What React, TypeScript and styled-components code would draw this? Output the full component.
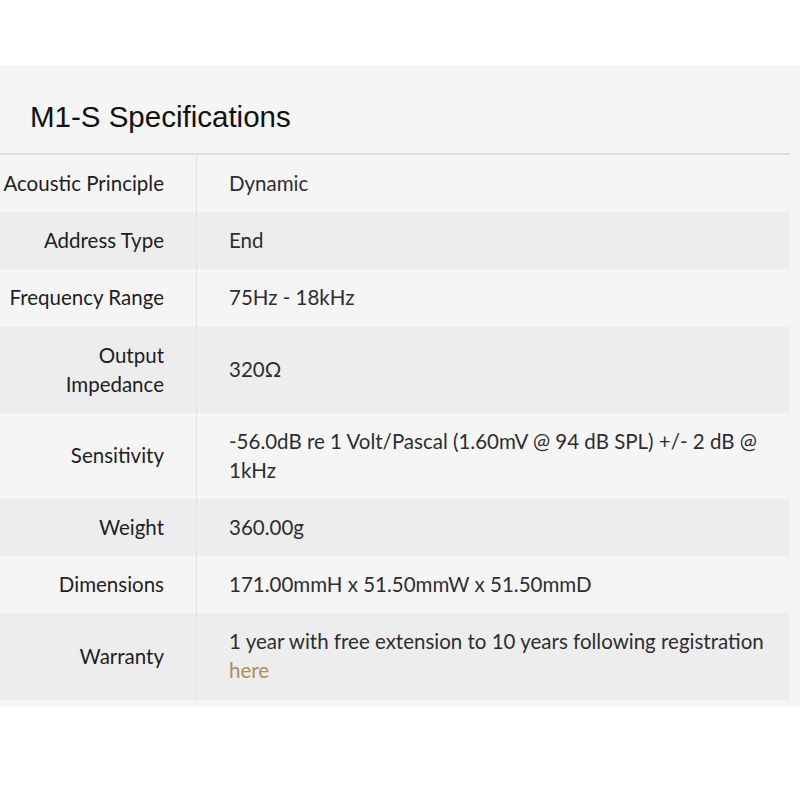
import React from "react";
import styled, { createGlobalStyle } from "styled-components";

const Global = createGlobalStyle`
  html, body { margin: 0; padding: 0; background: #ffffff; }
  * { box-sizing: border-box; }
`;

const Panel = styled.section`
  margin-top: 65px;
  width: 800px;
  background: #f5f5f6;
  padding-bottom: 7px;
`;

const Title = styled.h2`
  margin: 0 10px 0 0;
  padding: 16px 0 0 30px;
  height: 90px;
  display: flex;
  align-items: center;
  font-family: "Liberation Sans", Arial, sans-serif;
  font-weight: 400;
  font-size: 29.5px;
  color: #111;
  border-bottom: 2px solid #dedede;
`;

const Table = styled.div`
  width: 790px;
  display: grid;
  grid-template-columns: 197px 1fr;
`;

const Row = styled.div<{ $shade: boolean }>`
  display: contents;
  & > div {
    background: ${(p) => (p.$shade ? "#ededee" : "#f5f5f6")};
  }
`;

const Label = styled.div`
  font-family: Lato, "Open Sans", sans-serif;
  font-size: 20.5px;
  line-height: 29px;
  color: #1e1e1e;
  text-align: right;
  padding: 14.1px 32px 14.1px 0;
  border-right: 1px solid #e2e2e2;
  display: flex;
  align-items: center;
  justify-content: flex-end;
`;

const Value = styled.div`
  font-family: Lato, "Open Sans", sans-serif;
  font-size: 20.5px;
  line-height: 29px;
  color: #2e2e2e;
  padding: 14.1px 8px 14.1px 32px;
  display: flex;
  align-items: center;
`;

const Link = styled.a`
  color: #a88f5c;
  text-decoration: none;
`;

const rows: { label: React.ReactNode; value: React.ReactNode }[] = [
  { label: "Acoustic Principle", value: "Dynamic" },
  { label: "Address Type", value: "End" },
  { label: "Frequency Range", value: "75Hz - 18kHz" },
  { label: <>Output<br />Impedance</>, value: "320Ω" },
  {
    label: "Sensitivity",
    value: <span>-56.0dB re 1 Volt/Pascal (1.60mV @ 94 dB SPL) +/- 2 dB @<br />1kHz</span>,
  },
  { label: "Weight", value: "360.00g" },
  { label: "Dimensions", value: "171.00mmH x 51.50mmW x 51.50mmD" },
  {
    label: "Warranty",
    value: (
      <span>
        1 year with free extension to 10 years following registration
        <br />
        <Link href="#">here</Link>
      </span>
    ),
  },
];

export default function App() {
  return (
    <>
      <Global />
      <Panel>
        <Title>M1-S Specifications</Title>
        <Table>
          {rows.map((r, i) => (
            <Row key={i} $shade={i % 2 === 1}>
              <Label>{r.label}</Label>
              <Value>{r.value}</Value>
            </Row>
          ))}
        </Table>
      </Panel>
    </>
  );
}
